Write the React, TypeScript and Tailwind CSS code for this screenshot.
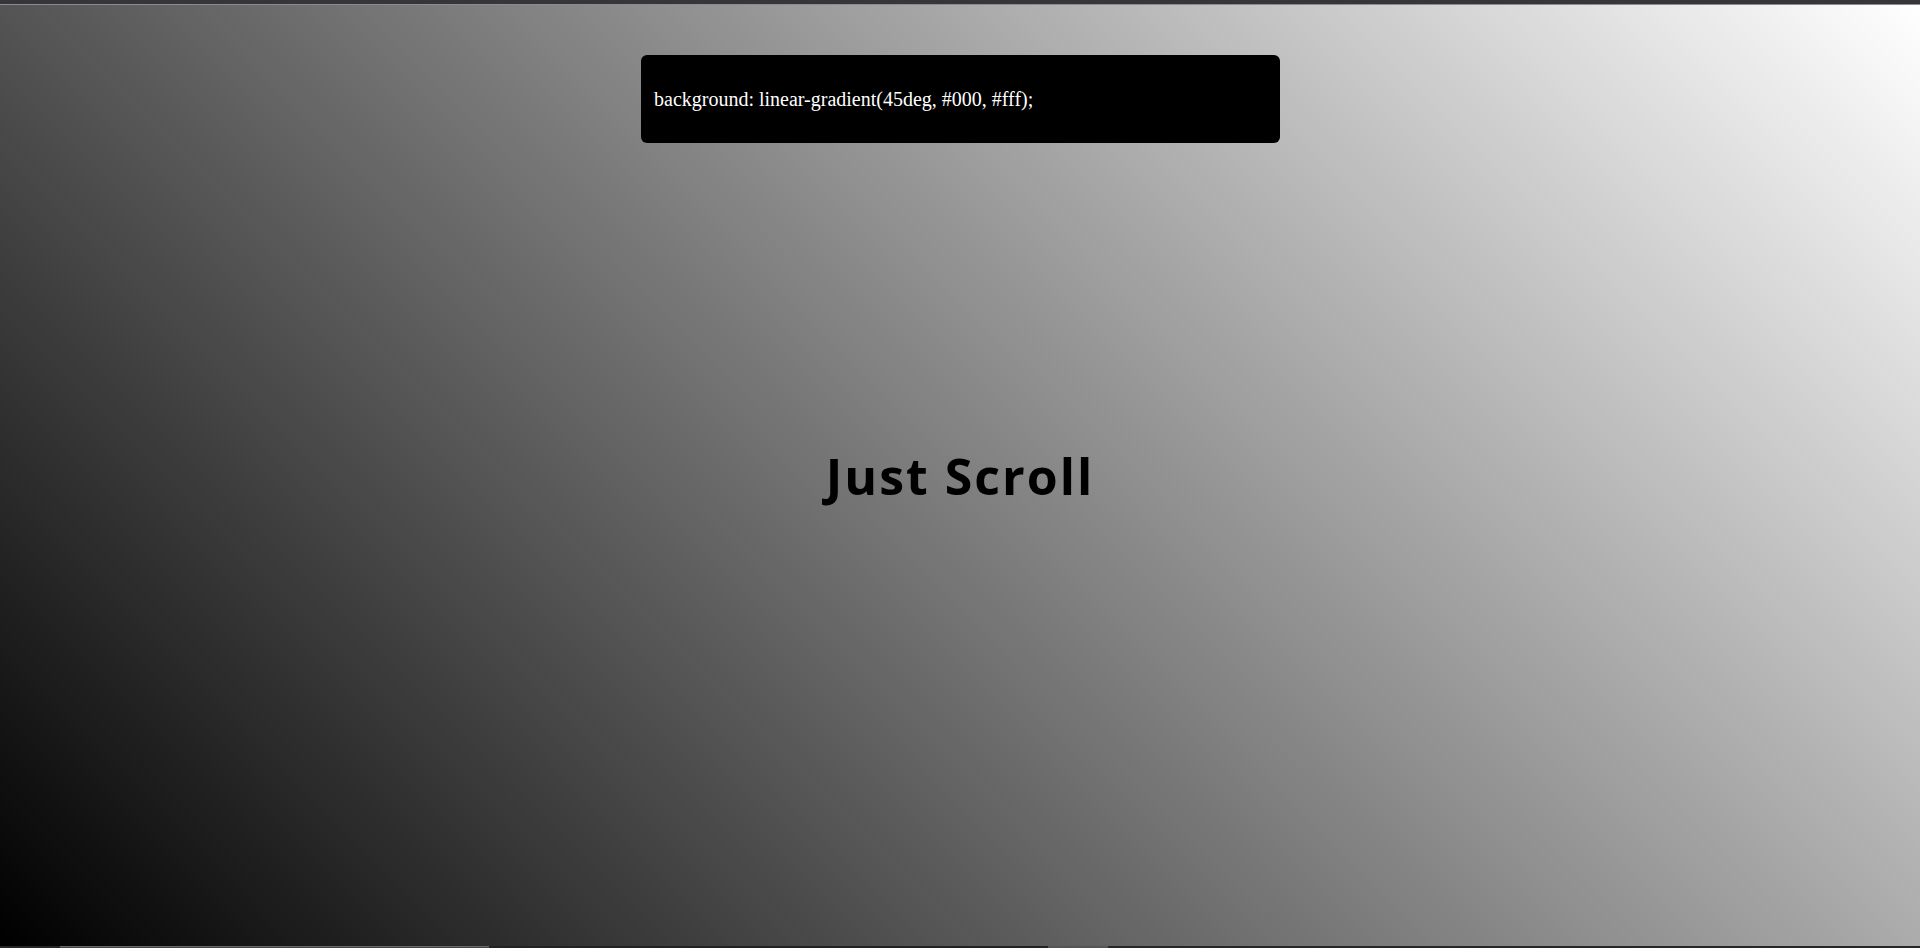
export default function App() {
  return (
    <div className="flex h-screen w-full flex-col overflow-hidden bg-[#35363a]">
      <div className="h-[4px] shrink-0 bg-[#35363a]" />
      <div className="h-px shrink-0 bg-[#8c8c8c]" />
      <main className="relative flex flex-1 items-center justify-center bg-[linear-gradient(45deg,#000,#fff)]">
        <div className="absolute left-[641px] top-[50px] flex h-[88px] w-[639px] items-center rounded-md bg-black px-[13px]">
          <p className="font-['Liberation_Serif','Times_New_Roman',serif] text-[20px] leading-none text-white">
            background: linear-gradient(45deg, #000, #fff);
          </p>
        </div>
        <h1 className="font-['Comic_Sans_MS','Open_Sans',sans-serif] text-[50px] font-bold leading-none tracking-[2px] text-black">
          Just Scroll
        </h1>
      </main>
      <div className="flex h-[2px] shrink-0">
        <div className="w-[60px] bg-[#262626]" />
        <div className="w-[429px] border-t border-[#6a6a6a] bg-[#444]" />
        <div className="w-[559px] bg-[#222]" />
        <div className="w-[60px] bg-[#555]" />
        <div className="flex-1 bg-[#2a2626]" />
      </div>
    </div>
  );
}
